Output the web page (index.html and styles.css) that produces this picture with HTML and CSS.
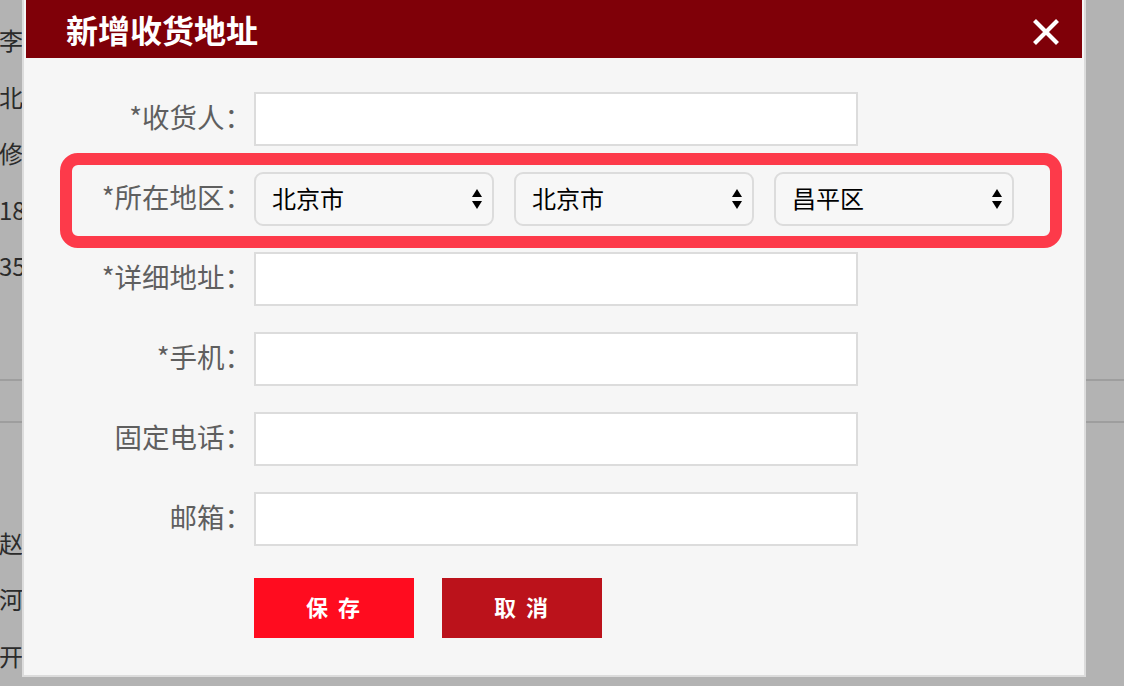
FILE: index.html
```html
<!DOCTYPE html>
<html lang="zh-CN">
<head>
<meta charset="utf-8">
<title>新增收货地址</title>
<link rel="stylesheet" href="styles.css">
</head>
<body>
<div class="page">
  <ul class="addr-list top">
    <li>李先生</li>
    <li>北京市</li>
    <li>修改</li>
    <li>18500000000</li>
    <li>35号楼</li>
  </ul>
  <div class="rule first"></div>
  <div class="rule second"></div>
  <ul class="addr-list bottom">
    <li>赵先生</li>
    <li>河北省</li>
    <li>开发区</li>
  </ul>
</div>

<div class="modal">
  <div class="modal-head">
    <h2 class="modal-title">新增收货地址</h2>
    <svg class="close" width="28" height="28" viewBox="0 0 28 28" aria-label="关闭">
      <path d="M2.5 2.5 L25.5 25.5 M25.5 2.5 L2.5 25.5" stroke="#fff" stroke-width="4.2" fill="none"/>
    </svg>
  </div>
  <form class="form">
    <div class="row">
      <label class="label">*收货人：</label>
      <input class="input" type="text">
    </div>
    <div class="row">
      <label class="label">*所在地区：</label>
      <div class="selects">
        <div class="select"><span>北京市</span>
          <svg width="12" height="24" viewBox="0 0 12 24"><path d="M6 2 L11 10 L1 10 Z M1 14 L11 14 L6 22 Z" fill="#000"/></svg>
        </div>
        <div class="select"><span>北京市</span>
          <svg width="12" height="24" viewBox="0 0 12 24"><path d="M6 2 L11 10 L1 10 Z M1 14 L11 14 L6 22 Z" fill="#000"/></svg>
        </div>
        <div class="select"><span>昌平区</span>
          <svg width="12" height="24" viewBox="0 0 12 24"><path d="M6 2 L11 10 L1 10 Z M1 14 L11 14 L6 22 Z" fill="#000"/></svg>
        </div>
      </div>
    </div>
    <div class="row">
      <label class="label">*详细地址：</label>
      <input class="input" type="text">
    </div>
    <div class="row">
      <label class="label">*手机：</label>
      <input class="input" type="text">
    </div>
    <div class="row">
      <label class="label">固定电话：</label>
      <input class="input" type="text">
    </div>
    <div class="row">
      <label class="label">邮箱：</label>
      <input class="input" type="text">
    </div>
    <div class="actions">
      <button type="button" class="btn btn-save">保存</button>
      <button type="button" class="btn btn-cancel">取消</button>
    </div>
  </form>
</div>

<div class="highlight"></div>
</body>
</html>
```

FILE: styles.css
```css
* { box-sizing: border-box; }

html, body {
  margin: 0;
  padding: 0;
  width: 1124px;
  height: 686px;
  overflow: hidden;
}

body {
  background: #b3b3b3;
  font-family: "Noto Sans CJK SC", "Noto Sans", sans-serif;
  position: relative;
}

/* background page (dimmed) */
.page {
  display: flex;
  flex-direction: column;
}

.addr-list {
  list-style: none;
  margin: 0;
  padding: 0;
  margin-left: -1px;
  width: 23px;
  overflow: hidden;
  font-size: 24px;
  line-height: 56.5px;
  color: #2b2b2b;
  white-space: nowrap;
}

.addr-list.top { padding-top: 12px; }

.rule {
  height: 2px;
  background: #9e9e9e;
}
.rule.first { margin-top: 84px; }
.rule.second { margin-top: 40px; }

.addr-list.bottom { margin-top: 92px; }

/* modal */
.modal {
  position: absolute;
  left: 22px;
  top: -4px;
  width: 1064px;
  border: 2px solid #dcdcdc;
  padding: 2px;
  background: #f6f6f6;
}

.modal-head {
  height: 58px;
  background: #7f0008;
  display: flex;
  align-items: center;
  justify-content: space-between;
  padding: 0 22px 0 40px;
}

.modal-title {
  margin: 0;
  color: #fff;
  font-size: 32px;
  font-weight: 700;
  line-height: 1;
}

.close {
  display: block;
  margin-top: 6px;
}

.form {
  display: flex;
  flex-direction: column;
  gap: 26px;
  padding: 34px 0 35px;
  margin: 0;
}

.row {
  display: flex;
  align-items: center;
  height: 54px;
}

.label {
  width: 226px;
  margin-right: 2px;
  text-align: right;
  font-size: 27.5px;
  line-height: 1;
  color: #5f5f5f;
  white-space: nowrap;
  margin-top: -4px;
}

.input {
  width: 604px;
  height: 54px;
  border: 2px solid #dcdcdc;
  background: #fff;
  margin: 0;
  padding: 0 12px;
  font: inherit;
  outline: none;
}

.selects {
  display: flex;
  gap: 20px;
}

.select {
  width: 240px;
  height: 54px;
  border: 2px solid #dcdcdc;
  border-radius: 9px;
  background: #f7f7f7;
  display: flex;
  align-items: center;
  justify-content: space-between;
  padding: 0 9px 4px 16px;
  font-size: 24px;
  color: #000;
}

.select svg { display: block; margin-top: 4px; }

.actions {
  display: flex;
  gap: 28px;
  padding-left: 228px;
  margin-top: 6px;
}

.btn {
  width: 160px;
  height: 60px;
  border: 0;
  margin: 0;
  padding: 0 0 4px 8px;
  color: #fff;
  font-family: "Noto Sans CJK SC", sans-serif;
  font-size: 22px;
  font-weight: 700;
  letter-spacing: 10px;
  cursor: pointer;
}

.btn-save { background: #ff0c1f; }
.btn-cancel { background: #bb121b; }

/* annotation overlay */
.highlight {
  position: absolute;
  left: 60px;
  top: 153px;
  width: 1002px;
  height: 95px;
  border: 12px solid #fd3a4a;
  border-radius: 18px;
  pointer-events: none;
}
```
